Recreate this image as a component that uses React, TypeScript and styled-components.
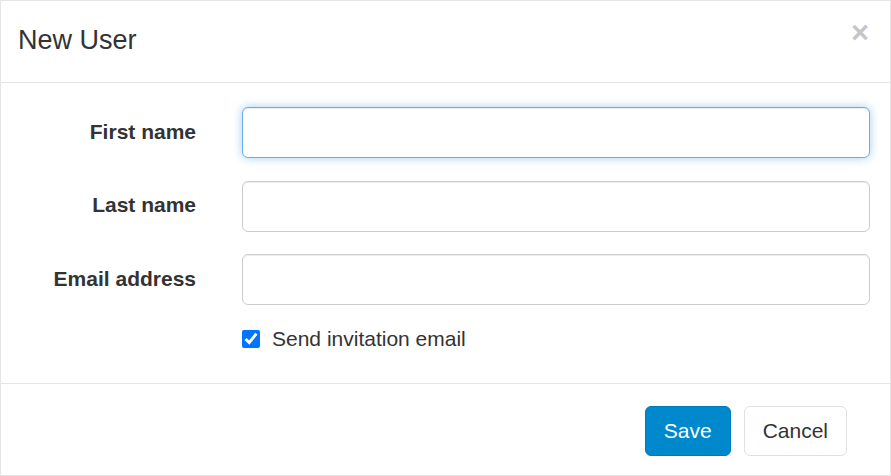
import React from 'react';
import styled, { createGlobalStyle } from 'styled-components';

const GlobalStyle = createGlobalStyle`
  html, body {
    margin: 0;
    padding: 0;
    background: #fff;
  }
  body {
    font-family: 'Liberation Sans', Arial, Helvetica, sans-serif;
    color: #333;
  }
`;

const Dialog = styled.div`
  width: 891px;
  height: 476px;
  box-sizing: border-box;
  border: 1px solid #e5e5e5;
  display: flex;
  flex-direction: column;
  background: #fff;
`;

const Header = styled.div`
  display: flex;
  justify-content: space-between;
  align-items: flex-start;
  padding: 20px 21px 23px 17px;
  border-bottom: 1px solid #e5e5e5;
`;

const Title = styled.h4`
  margin: 0;
  font-size: 27px;
  font-weight: 400;
  line-height: 38px;
  color: #333;
`;

const CloseButton = styled.button`
  border: 0;
  background: transparent;
  padding: 0;
  margin-top: -4px;
  font-family: 'Liberation Sans', Arial, sans-serif;
  font-size: 31px;
  font-weight: 700;
  line-height: 1;
  color: #000;
  opacity: 0.22;
  cursor: pointer;
`;

const Body = styled.div`
  flex: 1;
  padding: 24px 20px 0 0;
  display: grid;
  grid-template-columns: 195px 628px;
  column-gap: 46px;
  row-gap: 22.5px;
  align-content: start;
`;

const Label = styled.label`
  font-size: 21px;
  font-weight: 700;
  text-align: right;
  align-self: center;
  padding-bottom: 2px;
  color: #333;
`;

const Input = styled.input<{ focused?: boolean }>`
  box-sizing: border-box;
  width: 628px;
  height: 51px;
  padding: 9px 18px;
  font-family: inherit;
  font-size: 21px;
  color: #555;
  background: #fff;
  border: 1px solid ${(p) => (p.focused ? '#66afe9' : '#ccc')};
  border-radius: 6px;
  outline: none;
  box-shadow: ${(p) =>
    p.focused
      ? 'inset 0 1px 1px rgba(0,0,0,.075), 0 0 10px rgba(102,175,233,.6)'
      : 'inset 0 1px 1px rgba(0,0,0,.075)'};
`;

const CheckRow = styled.label`
  grid-column: 2;
  margin-top: -4px;
  display: flex;
  align-items: center;
  gap: 12px;
  height: 31px;
  font-size: 21px;
  color: #333;
  cursor: pointer;

  input {
    width: 18px;
    height: 18px;
    margin: 0;
  }
`;

const Footer = styled.div`
  display: flex;
  justify-content: flex-end;
  gap: 13px;
  padding: 22px 43px 19px 0;
  border-top: 1px solid #e5e5e5;
`;

const Button = styled.button<{ primary?: boolean }>`
  height: 50px;
  padding: 0 18px;
  font-family: inherit;
  font-size: 21px;
  border-radius: 6px;
  cursor: pointer;
  color: ${(p) => (p.primary ? '#fff' : '#333')};
  background: ${(p) => (p.primary ? '#0088cc' : '#fff')};
  border: 1px solid ${(p) => (p.primary ? '#007ab8' : '#e0e0e0')};
`;

export default function App() {
  return (
    <>
      <GlobalStyle />
      <Dialog>
        <Header>
          <Title>New User</Title>
          <CloseButton aria-label="Close">&times;</CloseButton>
        </Header>
        <Body>
          <Label htmlFor="first">First name</Label>
          <Input id="first" focused />
          <Label htmlFor="last">Last name</Label>
          <Input id="last" />
          <Label htmlFor="email">Email address</Label>
          <Input id="email" />
          <CheckRow>
            <input type="checkbox" defaultChecked />
            Send invitation email
          </CheckRow>
        </Body>
        <Footer>
          <Button primary>Save</Button>
          <Button>Cancel</Button>
        </Footer>
      </Dialog>
    </>
  );
}
